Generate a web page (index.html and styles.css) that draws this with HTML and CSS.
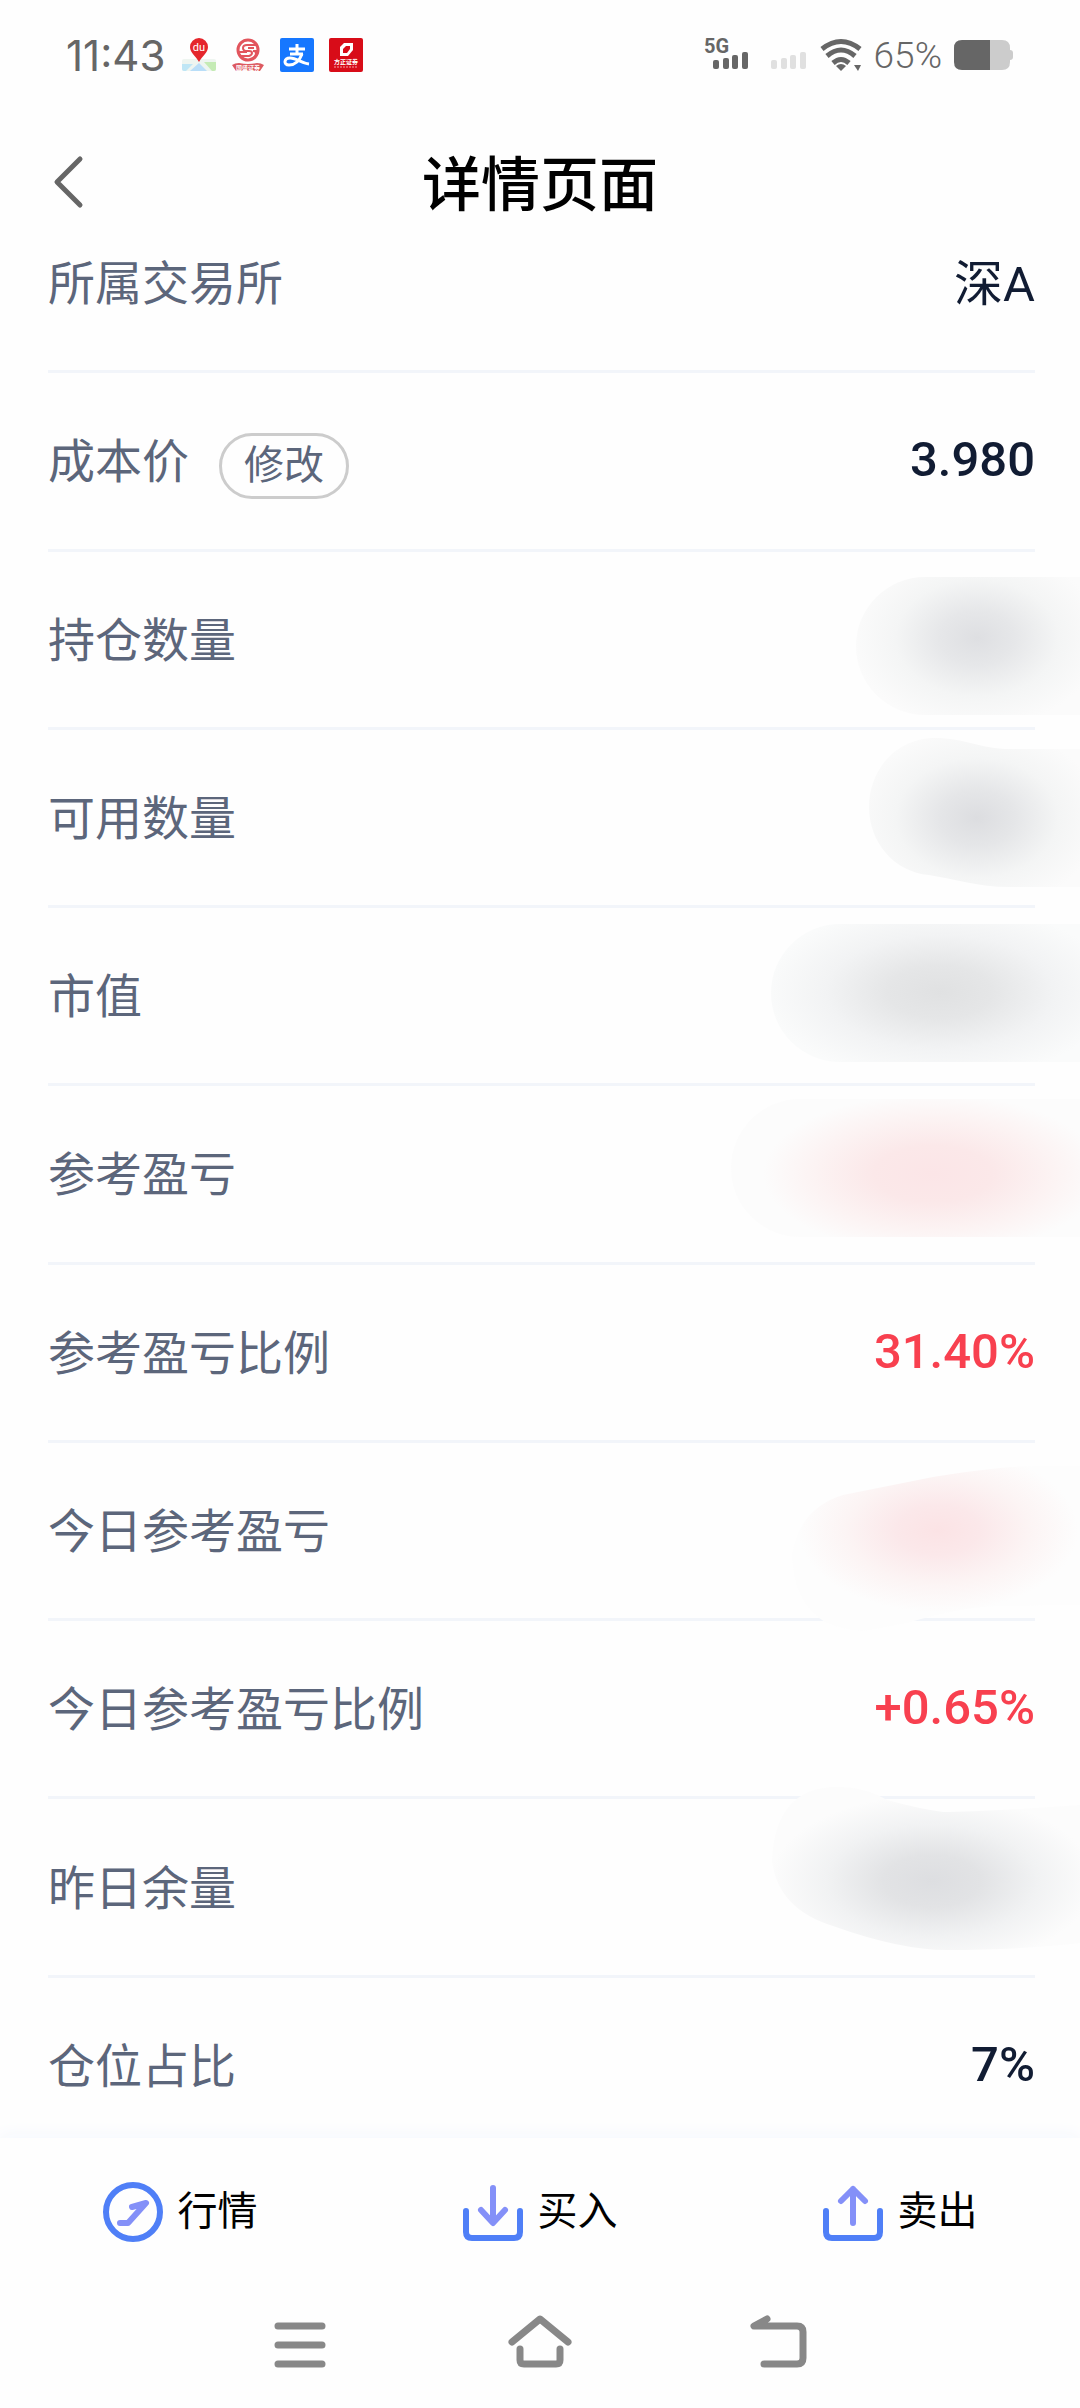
FILE: index.html
```html
<!DOCTYPE html>
<html lang="zh-CN">
   <head>
      <meta charset="UTF-8" />
      <meta name="viewport" content="width=device-width, initial-scale=1.0" />
      <title>详情页面</title>
      <link rel="stylesheet" href="styles.css">
   </head>
   <body>
      <div class="wrap">
         <div class="status">
            <div class="status-left">
               <span class="time">11:43</span>
               <div class="apps">
                  <svg width="34" height="34" viewBox="0 0 34 34">
                     <rect y="21" width="34" height="12" rx="2" fill="#eef5f0" />
                     <path d="M0 26h11l-7 7H2q-2 0-2-2z" fill="#bfe6f5" />
                     <path d="M17 25L8 33h17z" fill="#b9def8" />
                     <path d="M22 24h12v7q0 2-2 2h-2z" fill="#c5ebb5" />
                     <path d="M17 24C14 18 8 15 8 9a9 9 0 0 1 18 0c0 6-6 9-9 15z" fill="#e5262c" />
                     <text x="17" y="13" class="pin-text">du</text>
                  </svg>
                  <svg width="34" height="34" viewBox="0 0 34 34">
                     <circle cx="17" cy="12" r="10" fill="none" stroke="#e2555d" stroke-width="3" />
                     <path d="M25 7h-9q-4 0-4 3t4 3h2q3 0 3 2t-3 3h-8" fill="none" stroke="#e2555d" stroke-width="2" />
                     <path d="M23 10h-6M27 13h-5q3 0 3 2 0 5-6 6M8 14h8" fill="none" stroke="#e2555d" stroke-width="2" />
                     <path d="M1 27q3-2 7-2 9 2 18 0 4 0 7 2-2 3-4 6H5q-2-3-4-6z" fill="#dc5960" />
                     <text x="17" y="32" class="seal-text">国盛证券</text>
                  </svg>
                  <svg width="34" height="34" viewBox="0 0 34 34">
                     <rect width="34" height="34" rx="2" fill="#1677ff" />
                     <path d="M9 11h16M17 6v10M10 16h13" stroke="#fff" stroke-width="3" fill="none" />
                     <path d="M22 16c-3 8-8 11-13 11-6 0-5-7 1-7 7 0 11 5 19 6" stroke="#fff" stroke-width="3" fill="none" />
                  </svg>
                  <svg width="34" height="34" viewBox="0 0 34 34">
                     <rect width="34" height="34" rx="2" fill="#d80c18" />
                     <path d="M15 5h9v7l-5 6h-8V9z" fill="#fff" />
                     <path d="M17 8h4v3l-3 4h-4v-4z" fill="#d80c18" />
                     <text x="17" y="26" class="fz-text">方正证券</text>
                     <path d="M5 29h24" stroke="#f5a0a5" stroke-width="1" stroke-dasharray="2 1" />
                  </svg>
               </div>
            </div>
            <div class="status-right">
               <svg width="104" height="36" viewBox="0 0 104 36">
                  <text x="0" y="16" class="net-text">5G</text>
                  <g fill="#666">
                     <rect x="9" y="23" width="6" height="9" rx="2" />
                     <rect x="19" y="21" width="6" height="11" rx="2" />
                     <rect x="28" y="18" width="6" height="14" rx="2" />
                     <rect x="38" y="15" width="6" height="17" rx="2" />
                  </g>
                  <g fill="#e0e0e0">
                     <rect x="67" y="23" width="6" height="9" rx="2" />
                     <rect x="77" y="21" width="6" height="11" rx="2" />
                     <rect x="86" y="18" width="6" height="14" rx="2" />
                     <rect x="96" y="15" width="6" height="17" rx="2" />
                  </g>
               </svg>
               <svg width="42" height="36" viewBox="0 0 42 36">
                  <g fill="none" stroke="#666" stroke-width="5">
                     <path d="M2 12Q21-3 40 12" />
                     <path d="M7 19Q21 7 35 19" />
                     <path d="M13 26Q21 19 29 26" />
                  </g>
                  <path d="M16 29q5-4 10 0l-5 5z" fill="#666" />
                  <path d="M34 28h7l-3 6z" fill="#666" />
               </svg>
               <span class="percent">65%</span>
               <svg width="60" height="30" viewBox="0 0 60 30">
                  <path d="M36 0h12q8 0 8 8v2q3 0 3 3v4q0 3-3 3v2q0 8-8 8H36z" fill="#ccc" />
                  <path d="M8 0h28v30H8q-8 0-8-8V8q0-8 8-8z" fill="#666" />
               </svg>
            </div>
         </div>

         <header class="header">
            <button class="back" aria-label="返回">
               <svg width="32" height="54" viewBox="0 0 32 54">
                  <path d="M28 4L5 27l23 23" fill="none" stroke="#666" stroke-width="5" stroke-linecap="round" stroke-linejoin="round" />
               </svg>
            </button>
            <h1>详情页面</h1>
         </header>

         <dl class="list">
            <div class="row"><dt>所属交易所</dt><dd class="market">深A</dd></div>
            <div class="row"><dt>成本价 <button class="edit">修改</button></dt><dd>3.980</dd></div>
            <div class="row">
               <dt>持仓数量</dt>
               <dd class="mask">
                  <svg width="360" height="200" viewBox="0 -12 360 200">
                     <radialGradient id="hold" gradientUnits="userSpaceOnUse" cx="0" cy="0" r="1" gradientTransform="translate(257 87) scale(125 90)">
                        <stop offset="0" stop-color="#dedfe2" />
                        <stop offset="0.3" stop-color="#e6e7e9" />
                        <stop offset="0.65" stop-color="#f4f5f5" />
                        <stop offset="1" stop-color="#fbfbfb" />
                     </radialGradient>
                     <path d="M360 26H205a69 69 0 0 0 0 138h155z" fill="url(#hold)" />
                  </svg>
               </dd>
            </div>
            <div class="row">
               <dt>可用数量</dt>
               <dd class="mask">
                  <svg width="360" height="200" viewBox="0 -12 360 200">
                     <radialGradient id="usable" gradientUnits="userSpaceOnUse" cx="0" cy="0" r="1" gradientTransform="translate(257 89) scale(125 92)">
                        <stop offset="0" stop-color="#dcdde0" />
                        <stop offset="0.3" stop-color="#e5e6e8" />
                        <stop offset="0.65" stop-color="#f4f5f5" />
                        <stop offset="1" stop-color="#fbfbfb" />
                     </radialGradient>
                     <path d="M360 20H290C260 20 245 9 215 9c-40 0-66 33-66 69 0 35 25 65 60 68 25 4 50 12 80 12h71z" fill="url(#usable)" />
                  </svg>
               </dd>
            </div>
            <div class="row">
               <dt>市值</dt>
               <dd class="mask">
                  <svg width="360" height="200" viewBox="0 -12 360 200">
                     <radialGradient id="value" gradientUnits="userSpaceOnUse" cx="0" cy="0" r="1" gradientTransform="translate(220 84) scale(175 88)">
                        <stop offset="0" stop-color="#e0e1e2" />
                        <stop offset="0.3" stop-color="#e5e6e7" />
                        <stop offset="0.65" stop-color="#f2f3f4" />
                        <stop offset="1" stop-color="#fafbfb" />
                     </radialGradient>
                     <path d="M360 16H120a69 69 0 0 0 0 138h240z" fill="url(#value)" />
                  </svg>
               </dd>
            </div>
            <div class="row">
               <dt>参考盈亏</dt>
               <dd class="mask">
                  <svg width="360" height="200" viewBox="0 -12 360 200">
                     <radialGradient id="profit" gradientUnits="userSpaceOnUse" cx="0" cy="0" r="1" gradientTransform="translate(213 88) scale(170 80)">
                        <stop offset="0" stop-color="#fbe5e7" />
                        <stop offset="0.35" stop-color="#fbe8e9" />
                        <stop offset="0.7" stop-color="#fcf3f3" />
                        <stop offset="1" stop-color="#fcfcfc" />
                     </radialGradient>
                     <path d="M360 13H80a69 69 0 0 0 0 138h280z" fill="url(#profit)" />
                  </svg>
               </dd>
            </div>
            <div class="row"><dt>参考盈亏比例</dt><dd class="red">31.40%</dd></div>
            <div class="row">
               <dt>今日参考盈亏</dt>
               <dd class="mask">
                  <svg width="360" height="200" viewBox="0 -12 360 200">
                     <radialGradient id="today" gradientUnits="userSpaceOnUse" cx="0" cy="0" r="1" gradientTransform="translate(218 87) scale(140 82)">
                        <stop offset="0" stop-color="#fbe3e5" />
                        <stop offset="0.3" stop-color="#fbe8ea" />
                        <stop offset="0.65" stop-color="#fcf4f4" />
                        <stop offset="1" stop-color="#fdfdfd" />
                     </radialGradient>
                     <path d="M360 23Q310 22 280 25 250 28 213 34L123 52Q80 65 72 111 73 160 105 179 130 190 150 187L187 180Q240 164 280 163L360 162z" fill="url(#today)" />
                  </svg>
               </dd>
            </div>
            <div class="row"><dt>今日参考盈亏比例</dt><dd class="red">+0.65%</dd></div>
            <div class="row">
               <dt>昨日余量</dt>
               <dd class="mask">
                  <svg width="360" height="200" viewBox="0 -12 360 200">
                     <radialGradient id="rest" gradientUnits="userSpaceOnUse" cx="0" cy="0" r="1" gradientTransform="translate(212 82) scale(162 86)">
                        <stop offset="0" stop-color="#dddee1" />
                        <stop offset="0.3" stop-color="#e2e3e5" />
                        <stop offset="0.65" stop-color="#f1f2f3" />
                        <stop offset="1" stop-color="#fcfcfc" />
                     </radialGradient>
                     <path d="M360 6Q260 13 223 13 200 10 167 1 145-12 117-12 55-12 52 62 58 110 113 127 180 151 227 151 300 151 360 144z" fill="url(#rest)" />
                  </svg>
               </dd>
            </div>
            <div class="row"><dt>仓位占比</dt><dd>7%</dd></div>
         </dl>

         <nav class="actions">
            <a href="#">
               <svg width="60" height="60" viewBox="0 0 60 60">
                  <circle cx="30" cy="30" r="27" fill="none" stroke="#4f7ff7" stroke-width="6" />
                  <path d="M17 41h8l18-20-14 4" fill="none" stroke="#8490f8" stroke-width="6" stroke-linecap="round" stroke-linejoin="round" />
               </svg>
               <span>行情</span>
            </a>
            <a href="#">
               <svg width="60" height="60" viewBox="0 0 60 60">
                  <path d="M3 29v21q0 6 6 6h42q6 0 6-6V29" fill="none" stroke="#4f7ff7" stroke-width="6" stroke-linecap="round" />
                  <path d="M30 6v34M18 28l12 13 12-13" fill="none" stroke="#8490f8" stroke-width="6" stroke-linecap="round" stroke-linejoin="round" />
               </svg>
               <span>买入</span>
            </a>
            <a href="#">
               <svg width="60" height="60" viewBox="0 0 60 60">
                  <path d="M3 29v21q0 6 6 6h42q6 0 6-6V29" fill="none" stroke="#4f7ff7" stroke-width="6" stroke-linecap="round" />
                  <path d="M30 41V7M18 19L30 7l12 12" fill="none" stroke="#8490f8" stroke-width="6" stroke-linecap="round" stroke-linejoin="round" />
               </svg>
               <span>卖出</span>
            </a>
         </nav>

         <div class="system">
            <button aria-label="最近任务">
               <svg width="64" height="60" viewBox="0 0 64 60">
                  <path d="M10 13h44M10 32h44M10 51h44" stroke-width="7" />
               </svg>
            </button>
            <button aria-label="主页">
               <svg width="64" height="60" viewBox="0 0 64 60">
                  <path d="M4 29L32 6l28 23M12 36v11q0 4 4 4h32q4 0 4-4V36" stroke-width="7" />
               </svg>
            </button>
            <button aria-label="返回">
               <svg width="64" height="60" viewBox="0 0 64 60">
                  <path d="M19 6L6 13h43q6 0 6 6v26q0 6-6 6H16" stroke-width="7" />
               </svg>
            </button>
         </div>
      </div>
   </body>
</html>
```
FILE: styles.css
```css
* {
   box-sizing: border-box;
}

body {
   margin: 0;
   background-color: #fefefe;
   font-family: Roboto, 'Noto Sans CJK SC', sans-serif;
}

button {
   border: none;
   padding: 0;
   background: none;
   font-family: inherit;
}

svg {
   display: block;
   overflow: visible;
}

.wrap {
   min-height: 100vh;
   display: flex;
   flex-direction: column;
   overflow: hidden;
}

/* status bar */
.status {
   height: 110px;
   padding: 0 66px;
   display: flex;
   justify-content: space-between;
   align-items: center;
   color: #666;
}

.status-left,
.status-right,
.apps {
   display: flex;
   align-items: center;
}

.status-left {
   gap: 17px;
}

.apps {
   gap: 15px;
}

.status-right {
   gap: 12px;
}

.time {
   font-family: Inter, sans-serif;
   font-size: 42px;
}

.percent {
   font-size: 37px;
   font-weight: 300;
}

svg text {
   text-anchor: middle;
   fill: #fff;
}

.pin-text {
   font-size: 11px;
}

.seal-text {
   font-size: 6px;
   font-weight: bold;
}

.fz-text {
   font-size: 6px;
   font-weight: bold;
}

.status-right .net-text {
   font-size: 20px;
   font-weight: bold;
   text-anchor: start;
   fill: #666;
}

/* title */
.header {
   height: 85px;
   padding: 0 52px;
   display: grid;
   grid-template-columns: 1fr auto 1fr;
   align-items: start;
}

.back {
   justify-self: start;
   padding-top: 45px;
}

h1 {
   margin: 0;
   padding-top: 34px;
   font-size: 59px;
   font-weight: 500;
   line-height: 84px;
   color: #000;
}

/* detail rows, the bottom bar covers the end of the last one */
.list {
   flex: 1;
   margin: 0 0 -18px;
   padding: 0 45px 0 48px;
   display: grid;
   grid-auto-rows: minmax(120px, 1fr);
}

.row {
   display: flex;
   justify-content: space-between;
   align-items: center;
   border-bottom: 3px solid #f2f5fa;
}

.row:last-child {
   border-bottom-color: transparent;
}

dt {
   display: flex;
   align-items: center;
   gap: 30px;
   padding-bottom: 6px;
   font-size: 47px;
   color: #5c667b;
}

dd {
   margin: 0;
   padding-bottom: 2px;
   font-size: 49px;
   font-weight: 500;
   color: #111c33;
}

dd.market {
   padding-bottom: 6px;
   font-weight: 400;
}

dd.red {
   color: #f8404f;
}

.edit {
   height: 66px;
   margin-top: 16px;
   padding: 0 22px;
   border: 3px solid #ccc;
   border-radius: 33px;
   font-size: 40px;
   line-height: 58px;
   color: #5c667b;
}

/* hidden amounts, the smudge may run over the lines */
dd.mask {
   margin: -20px -45px -20px 0;
   padding: 0;
}

/* bottom bar */
.actions {
   position: relative;
   height: 148px;
   display: grid;
   grid-template-columns: repeat(3, 1fr);
   background-color: #fefefe;
   box-shadow: 0 -4px 16px #f5f8fd;
}

.actions a {
   display: flex;
   justify-content: center;
   align-items: center;
   gap: 15px;
   font-size: 40px;
   color: #000;
   text-decoration: none;
}

.actions span {
   padding-bottom: 8px;
}

.system {
   position: relative;
   height: 122px;
   padding: 0 180px 8px;
   display: grid;
   grid-template-columns: repeat(3, 1fr);
   justify-items: center;
   align-items: center;
   background-color: #fefefe;
}

.system path {
   fill: none;
   stroke: #888;
   stroke-linecap: round;
   stroke-linejoin: round;
}
```
